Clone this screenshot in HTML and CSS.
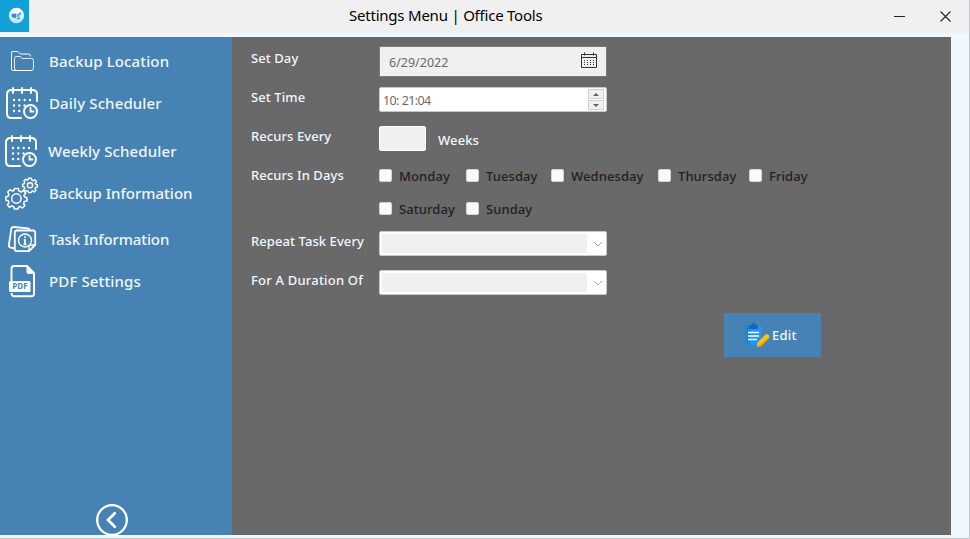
FILE: index.html
```html
<!DOCTYPE html>
<html lang="en">
<head>
<meta charset="utf-8">
<title>Settings Menu | Office Tools</title>
<link rel="stylesheet" href="styles.css">
</head>
<body>
<svg width="0" height="0" class="defs">
  <defs>
    <g id="calendar" fill="none" stroke="#fff" stroke-width="2" stroke-linecap="round">
      <path d="M37 101V94.5Q37 90 32.500 90H11.500Q7 90 7 94.500V113.500Q7 118 11.500 118H21M13 88V93M22 88V93M31 88V93"/>
      <circle cx="30.500" cy="111.500" r="6.500"/>
      <path d="M30.500 108V111.500H33.500" stroke-width="1.800"/>
      <path d="M14 100h.01M19.300 100h.01M24.700 100h.01M30 100h.01M14 105.500h.01M19.300 105.500h.01M14 111h.01M19.300 111h.01M24.500 105.500h.01" stroke-width="2.400"/>
    </g>
  </defs>
</svg>
<div class="window">
  <header class="titlebar">
    <div class="logo">
      <svg width="29" height="32" viewBox="0 0 29 32"><defs><linearGradient id="lg" x2="0" y2="1"><stop offset="0" stop-color="#fff"/><stop offset="1" stop-color="#b9e3fb"/></linearGradient></defs><circle cx="16.500" cy="15.500" r="7.700" fill="url(#lg)"/><path d="M12 14h4v3.500h-2.500L12 16.500zM17 14.500h3.500V12.500" fill="#3b82ee" stroke="#3b82ee" stroke-width=".6"/><path d="M17 16h2.500M17 18.500h3" stroke="#27a8f5" stroke-width="1.400"/></svg>
    </div>
    <h1 class="title">Settings Menu | Office Tools</h1>
    <div class="controls">
      <svg width="76" height="32" viewBox="890 0 76 32" fill="none" stroke="#222"><path d="M894 16.500h11"/><path d="M940.500 11.500l10 10M950.500 11.500l-10 10" stroke-width="1.100"/></svg>
    </div>
  </header>
  <div class="body">
    <nav class="sidebar">
      <a class="item"><svg width="49" height="42" viewBox="0 41 49 42" fill="none" stroke="#fff"><path d="M14 70.500H13Q11.500 70.500 11.500 69V53Q11.500 51.500 13 51.500H18L20.500 54H29Q30.500 54 30.500 56.500" /><path d="M16.500 70.500Q14.500 70.500 14.500 68V58.500Q14.500 56.500 16.500 56.500H20.500L22 58.500H31.500Q33.500 58.500 33.500 60.500V68Q33.500 70.500 31.500 70.500Z" opacity=".85"/><path d="M13 70.500H32"/></svg><span class="t1">Backup Location</span></a>
      <a class="item"><svg width="49" height="42" viewBox="0 83 49 42"><use href="#calendar"/></svg><span class="t2">Daily Scheduler</span></a>
      <a class="item gap6"><svg width="48" height="42" viewBox="1 83 48 42"><use href="#calendar"/></svg><span class="t3">Weekly Scheduler</span></a>
      <a class="item"><svg width="49" height="42" viewBox="0 173 49 42" fill="none" stroke="#fff" stroke-width="1.500" stroke-linejoin="round"><g transform="translate(16.400 198.500)"><path id="gear" d="M-2 -10H2L2.600 -7.400L4.700 -6.500L7 -8L9.300 -5.300L7.500 -3L8.200 -1.500L10.500 -1V2.500L8 3L7.200 5L8.500 7L6 9.500L3.800 8L2.200 8.700L1.500 10.500H-2L-2.600 8.300L-4.700 7.500L-7 8.800L-9 6.300L-7.500 4.200L-8.200 2.300L-10.500 1.700V-1.500L-8.300 -2.200L-7.500 -4.200L-8.700 -6.500L-6.300 -8.800L-4.200 -7.400L-2.600 -8Z"/><circle r="4.700"/></g><g transform="translate(30 185.300) scale(.7)" stroke-width="2"><use href="#gear"/><circle r="3.700"/></g></svg><span class="t4">Backup Information</span></a>
      <a class="item gap4"><svg width="49" height="42" viewBox="0 219 49 42" fill="none" stroke="#fff" stroke-width="1.800" stroke-linejoin="round"><path d="M15 248.500L10.500 247.500Q8.700 247 8.900 245L11.300 229Q11.600 226.800 14 227L28 228.300Q29.500 228.500 29.800 230"/><path d="M17 230.500H33Q35.200 230.500 35.200 232.700V245L29 251.200H17Q14.800 251.200 14.800 249V232.700Q14.800 230.500 17 230.500Z"/><path d="M35 245H29V251" stroke-width="1.400"/><circle cx="25" cy="240.500" r="6.500" fill="#4682b4" stroke-width="1.400"/><path d="M25 236.200v1.700M23.800 239.800H25V244.300M23.500 244.300h3" stroke-width="1.700"/></svg><span class="t5">Task Information</span></a>
      <a class="item"><svg width="49" height="42" viewBox="0 261 49 42"><path d="M11.500 281V268.500Q11.500 266 14 266H27L34 273V294Q34 296.200 31.500 296.200H14Q11.500 296.200 11.500 293" fill="none" stroke="#fff" stroke-width="1.900"/><path d="M26.500 266V271.500Q26.500 274 29 274H34.500Z" fill="#fff"/><rect x="9" y="281" width="21.500" height="11" rx="1.500" fill="#fff"/><text x="12.300" y="289.400" class="pdf" textLength="15.300">PDF</text></svg><span class="t6">PDF Settings</span></a>
      <button class="back"><svg width="32" height="32" viewBox="0 0 32 32" fill="none" stroke="#fff" stroke-width="2.300" stroke-linecap="round"><circle cx="16" cy="16" r="14.800"/><path d="M18.800 9.300L12 16l6.800 6.800" stroke-width="2.800"/></svg></button>
    </nav>
    <main class="panel">
      <div class="row"><label class="l1">Set Day</label>
        <div class="date"><span>6/29/2022</span><svg width="18" height="18" viewBox="0 0 18 18" fill="none" stroke="#333"><path d="M1.500 2.500h15v13h-15zM1 5.500h16M4.500 .5v3M13.500 .5v3"/><path d="M4 8.500h11M4 10.500h11M4 12.500h11" stroke-dasharray="1 2"/></svg></div></div>
      <div class="row"><label class="l2">Set Time</label>
        <div class="time field"><span>10:<i></i>21:04</span><div class="spin"><b class="up"></b><b class="down"></b></div></div></div>
      <div class="row"><label class="l3">Recurs Every</label>
        <div class="small"></div><span class="weeks">Weeks</span></div>
      <div class="row days"><label class="l4">Recurs In Days</label>
        <div class="checks">
          <span class="check"><i></i>Monday</span><span class="check"><i></i>Tuesday</span><span class="check"><i></i>Wednesday</span><span class="check"><i></i>Thursday</span><span class="check"><i></i>Friday</span>
          <span class="check"><i></i>Saturday</span><span class="check"><i></i>Sunday</span>
        </div></div>
      <div class="row"><label class="l5">Repeat Task Every</label>
        <div class="combo field"><div></div><svg width="10" height="6" viewBox="0 0 10 6" fill="none" stroke="#aaa"><path d="M1 1l4 4 4-4"/></svg></div></div>
      <div class="row"><label class="l6">For A Duration Of</label>
        <div class="combo field"><div></div><svg width="10" height="6" viewBox="0 0 10 6" fill="none" stroke="#aaa"><path d="M1 1l4 4 4-4"/></svg></div></div>
      <button class="edit"><svg width="26" height="26" viewBox="0 0 26 26"><rect x="1" y="3" width="17" height="20" rx="2.500" fill="#2196f3"/><path d="M1 5.500Q1 3 3.500 3H6V23H3.500Q1 23 1 20.500Z" fill="#1c86df"/><path d="M5 3h2.500Q8 .5 9.500 .5T11.500 3H14V5Q14 7 12 7H7Q5 7 5 5Z" fill="#1565c0"/><path d="M4 10.500h11M4 14h11M4 17.500h9" stroke="#fff" stroke-width="1.600"/><path d="M13 24.800L13.500 20.500L21.500 12.500Q23 11.500 24.500 13Q25.800 14.500 24.800 16L17 24.200Z" fill="#ffc107"/><path d="M13 24.800L24.800 16L17 24.200Z" fill="#e8a300"/></svg><span>Edit</span></button>
    </main>
  </div>
</div>
</body>
</html>
```
FILE: styles.css
```css
* { box-sizing: border-box; }
body { margin: 0; font-family: "Noto Sans", "Open Sans", sans-serif; overflow: hidden; }
.defs { display: none; }
.window { width: 970px; height: 539px; background: #f0f8ff; border-right: 1px solid #c4c8cc; border-bottom: 1px solid #c8c8c8; display: flex; flex-direction: column; }
.titlebar { height: 33px; background: #f0f0f0; display: flex; justify-content: space-between; flex: none; }
.logo { width: 29px; height: 32px; background: #12a1d7; }
.logo svg { display: block; }
.title { width: 300px; margin: 0 0 0 320px; font-size: 15px; font-weight: 400; line-height: 31px; letter-spacing: -.22px; color: #000; flex: none; white-space: nowrap; }
.controls { margin-left: auto; width: 79px; }
.body { flex: none; height: 498px; width: 951px; margin-top: 4px; display: flex; }
.sidebar { width: 232px; background: #4682b4; padding-top: 4px; display: flex; flex-direction: column; }
.item { display: flex; align-items: center; height: 42px; color: #f0f8ff; font-size: 15px; font-weight: 500; white-space: nowrap; flex: none; }
.item span { letter-spacing: .13px; padding-bottom: 2px; }
.item .t4 { letter-spacing: 0; }
.item .t5 { letter-spacing: -.12px; }
.item svg { flex: none; }
.gap6 { margin-top: 6px; }
.gap4 { margin-top: 4px; }
.pdf { font: 700 8px "Open Sans", sans-serif; fill: #4682b4; }
.back { margin: auto 0 -1px 96px; width: 32px; height: 32px; padding: 0; border: 0; background: none; }
.back svg { display: block; }
.panel { width: 719px; background: #696969; padding: 9px 0 0 19px; }
.row { display: flex; height: 39px; align-items: flex-start; }
.row label { width: 128px; flex: none; line-height: 24px; font-size: 13px; font-weight: 500; letter-spacing: .08px; color: #f0f8ff; white-space: nowrap; }
.row .l6 { letter-spacing: .2px; }
.days { height: 66px; }
.date { width: 228px; height: 31px; background: #f0f0f0; border: 1px solid #7a7a7a; display: flex; align-items: center; justify-content: space-between; padding: 0 8px 0 9px; font-size: 12.500px; color: #696969; }
.date svg { margin-top: -2px; }
.date span { margin-top: 1px; }
.field { width: 228px; height: 25px; margin-top: 2px; background: #fff; border: 1px solid #c8c8c8; border-radius: 2px; display: flex; }
.time { justify-content: space-between; font-size: 12.500px; line-height: 24px; color: #696969; padding: 1px 2px 1px 3px; }
.time > span { letter-spacing: -.65px; }
.time i { display: inline-block; width: 3px; }
.spin { width: 16px; display: flex; flex-direction: column; gap: 1px; }
.spin b { height: 10px; background: #f0f0f0; border: 1px solid #d0d0d0; display: flex; align-items: center; justify-content: center; }
.spin b::before { content: ""; border: solid transparent; border-width: 0 3px; }
.spin .up::before { border-bottom: 3px solid #606060; }
.spin .down::before { border-top: 3px solid #606060; }
.small { width: 47px; height: 25px; margin-top: 2px; background: #f0f0f0; border: 1px solid #fff; border-radius: 2px; }
.weeks { margin: 4px 0 0 12px; line-height: 24px; font-size: 13px; font-weight: 500; letter-spacing: .1px; color: #f0f8ff; }
.checks { display: grid; grid-template-columns: 87px 85px 107px 91px 80px; grid-auto-rows: 33px; padding-top: 6px; }
.check { display: flex; height: 13px; align-items: center; gap: 7px; font-size: 13px; font-weight: 500; letter-spacing: .08px; color: #222; line-height: 14px; white-space: nowrap; }
.check i { width: 13px; height: 13px; background: #fafafa; border: 1px solid #d4d4d4; border-radius: 2px; }
.combo { padding: 2px; align-items: center; justify-content: space-between; }
.combo div { width: 205px; height: 19px; background: #f0f0f0; }
.combo svg { margin-right: 1px; }
.edit { margin: 6px 0 0 473px; width: 97px; height: 44px; border: 0; padding: 0 0 0 20px; background: #4682b4; display: flex; align-items: center; gap: 2px; font: 500 13px "Noto Sans", sans-serif; letter-spacing: .2px; color: #f0f8ff; }
```
